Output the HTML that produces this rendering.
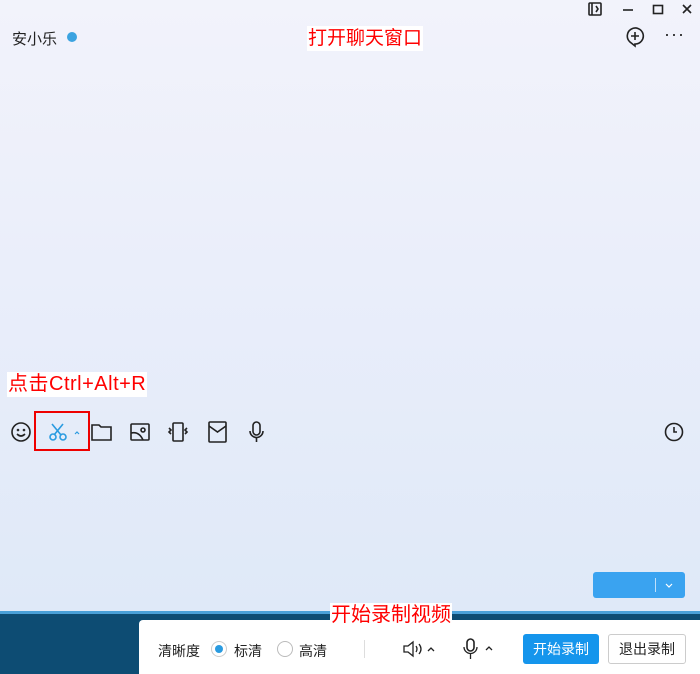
<!DOCTYPE html>
<html><head><meta charset="utf-8"><style>
*{margin:0;padding:0;box-sizing:border-box}
body{width:700px;height:674px;overflow:hidden;position:relative;font-family:"Liberation Sans","Noto Sans CJK SC",sans-serif;background:linear-gradient(180deg,#f2f3fb 0%,#eaeefa 40%,#dfe9f8 90%);}
.abs{position:absolute}
.lbl{position:absolute;background:#fff;color:#f00;font-size:19px;line-height:25px;padding:0 1px}
svg{position:absolute;fill:none;stroke:#222;stroke-width:1.6}
</style></head><body>
<div class="abs" style="left:12px;top:28px;font-size:15px;color:#222">安小乐</div>
<div class="abs" style="left:67px;top:32px;width:10px;height:10px;border-radius:50%;background:#3ba3e0"></div>
<div class="lbl" style="left:307px;top:26px">打开聊天窗口</div>
<svg style="left:588px;top:2px" width="14" height="14" viewBox="0 0 14 14"><rect x="1" y="1" width="12" height="12" rx="1"/><path d="M4 1v12M8 4l2 3-2 3"/></svg>
<svg style="left:621px;top:2px" width="14" height="14"><path d="M2 8h10"/></svg>
<svg style="left:651px;top:2px" width="14" height="14"><rect x="2.5" y="3.5" width="9" height="8"/></svg>
<svg style="left:680px;top:2px" width="14" height="14"><path d="M3 3l8 8M11 3l-8 8"/></svg>
<svg style="left:624px;top:25px" width="22" height="24" viewBox="0 0 22 24"><path d="M11 19a8 8 0 1 0-5-2l5 4z"/><path d="M11 7v8M7 11h8"/></svg>
<div class="abs" style="left:664px;top:24px;font-size:18px;letter-spacing:1px;color:#222">···</div>
<div class="lbl" style="left:7px;top:372px;font-size:20px;letter-spacing:0.5px">点击Ctrl+Alt+R</div>
<svg style="left:10px;top:421px" width="22" height="22"><circle cx="11" cy="11" r="9"/><path d="M7 13q4 4 8 0"/><circle cx="8" cy="9" r=".5"/><circle cx="14" cy="9" r=".5"/></svg>
<div class="abs" style="left:34px;top:411px;width:56px;height:40px;border:2px solid #e00"></div>
<svg style="left:48px;top:421px;stroke:#2a9be0" width="34" height="22"><path d="M4 3l9 11M15 3l-9 11"/><circle cx="5" cy="16" r="3"/><circle cx="15" cy="16" r="3"/><path d="M27 13l2-2 2 2" stroke-width="1.2"/></svg>
<svg style="left:90px;top:421px" width="24" height="22"><path d="M2 4h7l2 2h10v13H2z"/></svg>
<svg style="left:129px;top:421px" width="22" height="22"><rect x="2" y="3" width="18" height="16" rx="1"/><path d="M2 12q8-2 12 7"/><circle cx="14" cy="9" r="2"/></svg>
<svg style="left:166px;top:421px" width="24" height="22"><rect x="7" y="2" width="10" height="18" rx="1"/><path d="M3 7l2 2-2 2 2 2M21 7l-2 2 2 2-2 2"/></svg>
<svg style="left:207px;top:420px" width="22" height="24"><rect x="2" y="2" width="17" height="20" rx="1"/><path d="M2 6l8.5 6 8.5-6"/></svg>
<svg style="left:246px;top:420px" width="22" height="24"><rect x="7" y="2" width="7" height="13" rx="3.5"/><path d="M4 11a6.5 6.5 0 0 0 13 0M10.5 18v4"/></svg>
<svg style="left:663px;top:421px" width="22" height="22"><circle cx="11" cy="11" r="8.5"/><path d="M11 6v5h3"/></svg>
<div class="abs" style="left:593px;top:572px;width:92px;height:26px;border-radius:3px;background:#3aa3f0"></div>
<div class="abs" style="left:655px;top:578px;width:1px;height:14px;background:#bfe0fb"></div>
<svg style="left:663px;top:579px;stroke:#fff;stroke-width:1.2" width="12" height="12"><path d="M3 5l3 3 3-3"/></svg>
<div class="abs" style="left:0;top:611px;width:700px;height:63px;background:#0d4c73"></div>
<div class="abs" style="left:0;top:611px;width:700px;height:3px;background:#4aa0d8"></div>
<div class="abs" style="left:139px;top:620px;width:561px;height:54px;background:#fff;border-radius:4px 0 0 0"></div>
<div class="lbl" style="left:330px;top:603px;font-size:20px">开始录制视频</div>
<div class="abs" style="left:158px;top:641px;font-size:14px;color:#222">清晰度</div>
<div class="abs" style="left:211px;top:641px;width:16px;height:16px;border-radius:50%;border:1px solid #ccc"><div style="margin:3px;width:8px;height:8px;border-radius:50%;background:#2a9be0"></div></div>
<div class="abs" style="left:234px;top:641px;font-size:14px;color:#222">标清</div>
<div class="abs" style="left:277px;top:641px;width:16px;height:16px;border-radius:50%;border:1px solid #bbb"></div>
<div class="abs" style="left:299px;top:641px;font-size:14px;color:#222">高清</div>
<div class="abs" style="left:364px;top:640px;width:1px;height:18px;background:#ddd"></div>
<svg style="left:401px;top:638px" width="36" height="22"><path d="M3 8h4l5-4v14l-5-4H3zM15 8q2 3 0 6M18 6q4 5 0 10M27 13l3-3 3 3" stroke-width="1.3"/></svg>
<svg style="left:460px;top:637px" width="36" height="24"><rect x="7" y="2" width="7" height="12" rx="3.5"/><path d="M4 10a6.5 6.5 0 0 0 13 0M10.5 17v5M26 13l3-3 3 3" stroke-width="1.3"/></svg>
<div class="abs" style="left:523px;top:634px;width:76px;height:30px;border-radius:3px;background:#1595ec;color:#fff;font-size:14px;line-height:30px;text-align:center">开始录制</div>
<div class="abs" style="left:608px;top:634px;width:78px;height:30px;border-radius:3px;border:1px solid #ccc;color:#222;font-size:14px;line-height:28px;text-align:center">退出录制</div>
</body></html>
